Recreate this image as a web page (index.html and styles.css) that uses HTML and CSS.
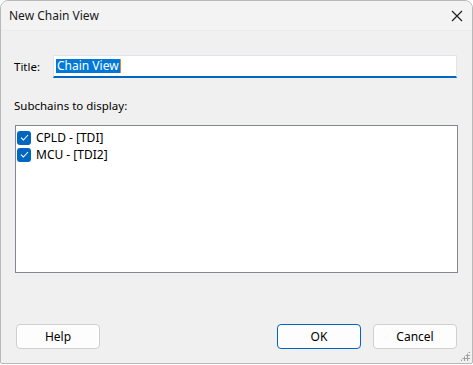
FILE: index.html
```html
<!DOCTYPE html>
<html lang="en">
<head>
<meta charset="UTF-8">
<meta name="viewport" content="width=device-width, initial-scale=1.0">
<title>New Chain View</title>
<link rel="stylesheet" href="styles.css">
</head>
<body>

<div class="dlg">
  <div class="dlg_title">
    <span class="caption">New Chain View</span>
    <svg class="close" width="12" height="12" viewBox="0 0 12 12">
      <path d="M1 1 L11 11 M11 1 L1 11" stroke="#1a1a1a" stroke-width="1.1" fill="none"/>
    </svg>
  </div>

  <div class="dlg_body">
    <div class="row_title">
      <span class="lbl">Title:</span>
      <div class="edit"><span class="sel">Chain View</span><span class="caret"></span></div>
    </div>

    <div class="lbl sub_lbl">Subchains to display:</div>

    <ul class="listbox">
      <li><span class="chk"><svg width="9" height="7" viewBox="0 0 9 7"><path d="M1 3.6 L3.4 6 L8 1" stroke="#fff" stroke-width="1.1" fill="none"/></svg></span>CPLD - [TDI]</li>
      <li><span class="chk"><svg width="9" height="7" viewBox="0 0 9 7"><path d="M1 3.6 L3.4 6 L8 1" stroke="#fff" stroke-width="1.1" fill="none"/></svg></span>MCU - [TDI2]</li>
    </ul>

    <div class="btns">
      <a href="" class="btn">Help</a>
      <span class="spacer"></span>
      <a href="" class="btn ok">OK</a>
      <a href="" class="btn">Cancel</a>
    </div>
  </div>

  <div class="grip"></div>
</div>

</body>
</html>
```

FILE: styles.css
```css
* {margin:0; padding:0; box-sizing: border-box; text-decoration: none;}
body {width: 473px; height: 365px; background: #fff; font-family: "Noto Sans", sans-serif; font-size: 11.5px; color: #000; overflow: hidden;}
li {list-style: none;}

.dlg {width: 473px; height: 364px; border: 1px solid #b9b9b9; border-radius: 8px 8px 2px 2px; background: #f0f0f0; display: flex; flex-direction: column; position: relative; overflow: hidden;}
.dlg_title {height: 30px; background: #f3f3f3; border-bottom: 1px solid #ebebeb; display: flex; align-items: center; padding: 0 9px 0 8px;}
.dlg_title .caption {flex: 1; font-size: 12px; color: #1a1a1a;}

.dlg_body {flex: 1; display: flex; flex-direction: column; padding: 24px 14px 0 13px;}
.lbl {line-height: 16px; color: #000;}

.row_title {display: flex; align-items: center; height: 23px;}
.row_title .lbl {width: 39px;}
.edit {flex: 1; height: 23px; margin-right: 1px; background: #fff; border: 1px solid #e2e6ea; border-bottom: 2px solid #0067c0; display: flex; align-items: center; padding-left: 2px;}
.edit .sel {background: #0078d7; color: #fff; line-height: 14px; padding: 0 1px; font-size: 12px;}
.edit .caret {width: 1px; height: 14px; background: #e08a3c;}

.sub_lbl {margin-top: 20px;}

.listbox {margin: 11px 0 0 1px; height: 148px; width: 443px; background: #fff; border: 1px solid #828790; padding: 3px 0 0 1px;}
.listbox li {display: flex; align-items: center; height: 17px; line-height: 17px; font-size: 12px;}
.chk {width: 14px; height: 14px; border-radius: 3px; background: #0067c0; display: flex; align-items: center; justify-content: center; margin-right: 5px;}

.btns {display: flex; margin-top: 51px; padding: 0 1px 0 2px;}
.btns .spacer {flex: 1;}
.btn {width: 84px; height: 25px; border: 1px solid #d0d0d0; border-radius: 4px; background: #fdfdfd; color: #000; display: flex; align-items: center; justify-content: center; line-height: 16px; font-size: 12px;}
.btn.ok {border-color: #0067c0; margin-right: 12px;}

.grip {position: absolute; right: 2px; bottom: 2px; width: 10px; height: 10px;
  background-image: radial-gradient(circle, #a0a0a0 1px, transparent 1.2px); background-size: 3px 3px;
  clip-path: polygon(100% 0, 100% 100%, 0 100%);}
```
